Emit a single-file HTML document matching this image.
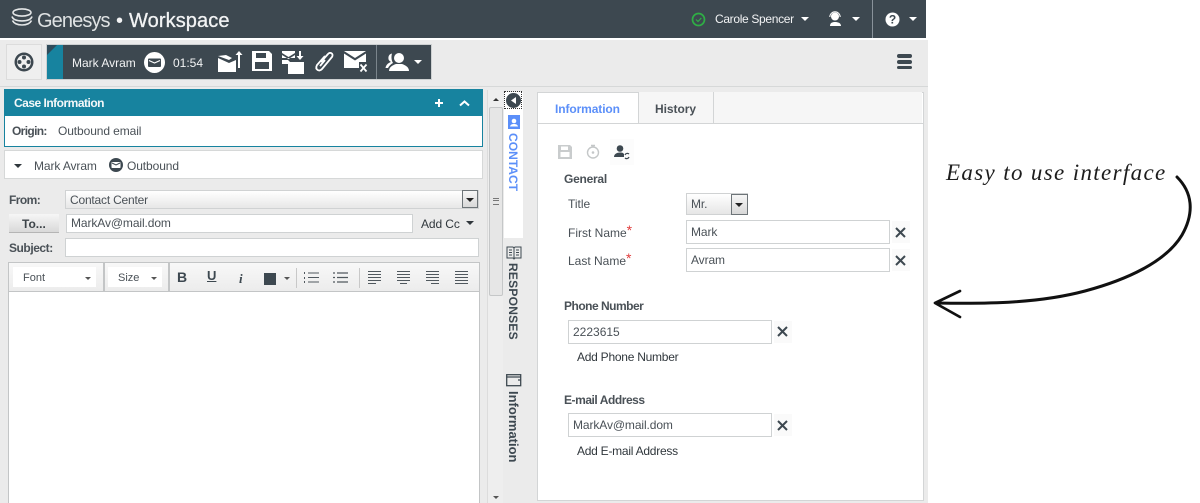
<!DOCTYPE html>
<html><head><meta charset="utf-8"><style>
html,body{margin:0;padding:0;background:#fff}
#p{position:relative;width:1200px;height:503px;overflow:hidden;background:#fff;font:12px "Liberation Sans",sans-serif;color:#4a5157}
#p div,#p span.a,#p svg{position:absolute}
.t{white-space:nowrap;line-height:14px}
.in{background:#fff;border:1px solid #cfd2d3;box-sizing:border-box;line-height:17px;padding-left:4px;white-space:nowrap}
.b{font-weight:bold}
.x{background:#fafafa;width:18px;height:22px}
.car{width:0;height:0;border-left:4px solid transparent;border-right:4px solid transparent;border-top:4px solid #fff}
.c2{width:0;height:0;border-left:3px solid transparent;border-right:3px solid transparent;border-top:3px solid #555}
.v{writing-mode:vertical-rl;white-space:nowrap;font-weight:bold;line-height:16px}
</style></head><body><div id="p">

<!-- top bar -->
<div style="left:0;top:0;width:926px;height:38px;background:#3d4850"></div>
<svg style="left:10px;top:7px" width="24" height="22" viewBox="0 0 24 22" fill="none" stroke="#e4e6e7" stroke-width="1.6"><ellipse cx="12" cy="5.5" rx="9" ry="3.6"/><path d="M2 9.5c1 3 5 4.4 10 4.400s9-1.400 10-4.400M2.500 13.500c1.500 3 5 4.500 9.500 4.500s8-1.500 9.500-4.500"/></svg>
<div class="t" style="left:37px;top:9px;font-size:20px;line-height:24px;color:#dfe2e3;letter-spacing:-.9px">Genesys</div>
<div class="t" style="left:116px;top:9px;font-size:20px;line-height:24px;color:#f2f3f4">&bull;</div>
<div class="t" style="left:129px;top:9px;font-size:20px;line-height:24px;color:#f2f3f4;letter-spacing:.1px;-webkit-text-stroke:.3px #f2f3f4">Workspace</div>
<svg style="left:691px;top:12px" width="15" height="15" viewBox="0 0 15 15" fill="none" stroke="#2fae45" stroke-width="1.700"><circle cx="7.500" cy="7.500" r="6"/><path d="M5 7.500l2 2 3.300-3.500" stroke-width="1.200"/></svg>
<div class="t" style="left:715px;top:12px;color:#f2f3f4;letter-spacing:-.33px">Carole Spencer</div>
<div class="car" style="left:801px;top:17px"></div>
<svg style="left:827px;top:11px" width="17" height="16" viewBox="0 0 17 16" fill="#fff"><circle cx="8" cy="5.500" r="4"/><path d="M3 15c0-3 2-4 5-4s6 1 6 4z"/><path d="M2.800 6a5.200 5.200 0 0 1 10.400 0" fill="none" stroke="#fff" stroke-width="1"/></svg>
<div class="car" style="left:852px;top:17px"></div>
<div style="left:872px;top:0;width:1px;height:38px;background:#89929a"></div>
<svg style="left:885px;top:12px" width="15" height="15" viewBox="0 0 15 15"><circle cx="7.500" cy="7.500" r="7" fill="#fff"/><text x="7.500" y="11.500" text-anchor="middle" font-family="Liberation Sans" font-weight="bold" font-size="12" fill="#3d4850">?</text></svg>
<div class="car" style="left:909px;top:17px"></div>

<!-- main bg -->
<div style="left:0;top:40px;width:928px;height:463px;background:#ebebeb"></div>
<div style="left:0;top:86px;width:928px;height:1px;background:#d6d8d8"></div>

<!-- toolbar -->
<div style="left:6px;top:44px;width:36px;height:36px;box-sizing:border-box;border:1px solid #dcdcdc;background:#efefef"></div>
<svg style="left:13px;top:51px" width="22" height="22" viewBox="0 0 22 22"><circle cx="11" cy="11" r="9.500" fill="#3d4850"/><circle cx="11" cy="11" r="7" fill="#efefef"/><g fill="#3d4850"><circle cx="11" cy="6.500" r="2"/><circle cx="11" cy="15.500" r="2"/><circle cx="6.500" cy="11" r="2"/><circle cx="15.500" cy="11" r="2"/></g></svg>
<div style="left:46px;top:44px;width:386px;height:36px;background:#3d4850;border:1px solid #cdd0d1;box-sizing:border-box"></div>
<div style="left:47px;top:45px;width:16px;height:34px;background:#17839f"></div>
<svg style="left:47px;top:45px" width="16" height="34"><path d="M0 0h10L0 10z" fill="#2f4b5a"/></svg>
<div class="t" style="left:72px;top:56px;color:#f2f3f4;letter-spacing:0">Mark Avram</div>
<svg style="left:144px;top:52px" width="22" height="22" viewBox="0 0 22 22"><circle cx="10.500" cy="10.500" r="10.500" fill="#fff"/><rect x="4" y="6.500" width="13" height="8.500" rx="1" fill="#3d4850"/><path d="M5 8.500l5.500 2.500 5.500-2.500" stroke="#fff" stroke-width="1.200" fill="none"/></svg>
<div class="t" style="left:173px;top:56px;color:#f2f3f4">01:54</div>
<svg style="left:217px;top:50px" width="27" height="24" viewBox="0 0 27 24" fill="#fff"><path d="M1 8l11 5 7-3v12H1z"/><path d="M1 6l8-1 6 3-3 2z"/><path d="M21 18V5h-2.500L22 1l3.500 4H23v13z"/></svg>
<svg style="left:251px;top:50px" width="22" height="22" viewBox="0 0 22 22"><path d="M1 1h17l3 3v17H1z" fill="#fff"/><rect x="5" y="3" width="10" height="5" fill="#3d4850"/><rect x="4" y="12" width="14" height="7" fill="#3d4850"/></svg>
<svg style="left:281px;top:50px" width="24" height="24" viewBox="0 0 24 24" fill="#fff"><path d="M1 1h13v2L7.500 7 1 3z"/><path d="M1 5l6.500 4L14 5v3H1z"/><path d="M18 1h2v5h2.500L19 10l-3.500-4H18z"/><path d="M1 10h6l2 2h14v12H7V14H1z"/></svg>
<svg style="left:313px;top:50px" width="23" height="24" viewBox="0 0 23 24" fill="none" stroke="#fff" stroke-width="1.800"><path d="M8 12l7-8c2-2.500 6-.5 4 3L9 19c-2.500 3-7.500 1-5-4l8-9"/><path d="M12 10l-5 6"/></svg>
<svg style="left:344px;top:51px" width="25" height="22" viewBox="0 0 25 22" fill="#fff"><path d="M0 0h22L11 7z"/><path d="M0 2.500l11 7 11-7V11h-7v6H0z"/><path d="M16.500 13.500l6 7m0-7l-6 7" stroke="#fff" stroke-width="1.800"/></svg>
<div style="left:376px;top:45px;width:1px;height:34px;background:#7b858c"></div>
<svg style="left:385px;top:52px" width="25" height="20" viewBox="0 0 25 20" fill="#fff"><circle cx="14" cy="6" r="5"/><path d="M4 19c0-4 4-6 7-7h6c3 1 7 3 7 7z"/><path d="M7 1.500a4.500 4.500 0 0 0-1 8.500C3 11 1 13 .5 16H3c1-2 3-4 5-5-1.500-2.500-2-6-1-9.500z"/></svg>
<div class="car" style="left:414px;top:60px"></div>
<div style="left:897px;top:54px;width:15px;height:3.500px;background:#3d4850;border-radius:2px"></div>
<div style="left:897px;top:60px;width:15px;height:3.500px;background:#3d4850;border-radius:2px"></div>
<div style="left:897px;top:65.500px;width:15px;height:3.500px;background:#3d4850;border-radius:2px"></div>

<!-- case info -->
<div style="left:4px;top:89px;width:479px;height:58px;box-sizing:border-box;border:1px solid #17839f;background:#fff"></div>
<div style="left:4px;top:89px;width:479px;height:27px;background:#17839f"></div>
<div class="t b" style="left:14px;top:96px;color:#f4f8f9;letter-spacing:-.5px">Case Information</div>
<svg style="left:434px;top:98px" width="36" height="11" viewBox="0 0 36 11" fill="none" stroke="#fff" stroke-width="2"><path d="M5 1v8M1 5h8M26 7.500l4.500-4 4.500 4"/></svg>
<div class="t b" style="left:12px;top:124px;color:#4a5157;letter-spacing:-.65px">Origin:</div>
<div class="t" style="left:58px;top:124px;letter-spacing:-.1px">Outbound email</div>

<!-- party -->
<div style="left:4px;top:150px;width:479px;height:29px;box-sizing:border-box;border:1px solid #d6d8d8;background:#fff"></div>
<div style="left:14px;top:164px;width:0;height:0;border-left:4px solid transparent;border-right:4px solid transparent;border-top:4px solid #30373c"></div>
<div class="t" style="left:34px;top:159px;letter-spacing:-.1px">Mark Avram</div>
<svg style="left:109px;top:158px" width="14" height="14" viewBox="0 0 14 14"><circle cx="7" cy="7" r="7" fill="#3d4850"/><rect x="2.500" y="4" width="9" height="6" rx=".8" fill="#fff"/><path d="M3 5l4 2 4-2" stroke="#3d4850" fill="none"/></svg>
<div class="t" style="left:127px;top:159px;letter-spacing:-.1px">Outbound</div>

<!-- form -->
<div class="t b" style="left:9px;top:193px;letter-spacing:-.55px">From:</div>
<div style="left:65px;top:190px;width:414px;height:19px;box-sizing:border-box;border:1px solid #d0d2d3;background:linear-gradient(#fff,#e7e7e7)"></div>
<div class="t" style="left:70px;top:193px;letter-spacing:-.2px">Contact Center</div>
<div style="left:462px;top:190px;width:16px;height:18px;box-sizing:border-box;border:1px solid #6d7478;background:linear-gradient(#f6f6f6,#d8d8d8)"></div>
<div style="left:466px;top:198px;width:0;height:0;border-left:4px solid transparent;border-right:4px solid transparent;border-top:4px solid #222"></div>
<div style="left:9px;top:214px;width:50px;height:19px;background:linear-gradient(#f6f6f6,#d9d9d9);border-bottom:1px solid #b5b5b5;box-sizing:border-box"></div>
<div class="t b" style="left:22px;top:217px;color:#3c4348">To...</div>
<div class="in" style="left:66px;top:214px;width:347px;height:19px;letter-spacing:-.1px">MarkAv@mail.dom</div>
<div class="t" style="left:421px;top:217px;color:#30373c;letter-spacing:-.1px">Add Cc</div>
<div style="left:466px;top:221px;width:0;height:0;border-left:4px solid transparent;border-right:4px solid transparent;border-top:4px solid #30373c"></div>
<div class="t b" style="left:9px;top:241px;letter-spacing:-.45px">Subject:</div>
<div class="in" style="left:65px;top:238px;width:414px;height:19px"></div>

<!-- editor -->
<div style="left:8px;top:262px;width:472px;height:242px;box-sizing:border-box;border:1px solid #c3c5c6;background:#fff"></div>
<div style="left:9px;top:263px;width:470px;height:29px;background:linear-gradient(#f8f8f8,#ececec);border-bottom:1px solid #c3c5c6;box-sizing:border-box"></div>
<div style="left:13px;top:267px;width:83px;height:20px;background:#fff"></div>
<div class="t" style="left:23px;top:271px;font-size:11px">Font</div><div class="c2" style="left:85px;top:277px"></div>
<div style="left:103px;top:263px;width:2px;height:28px;background:#c3c5c6"></div>
<div style="left:108px;top:267px;width:54px;height:20px;background:#fff"></div>
<div class="t" style="left:118px;top:271px;font-size:11px">Size</div><div class="c2" style="left:151px;top:277px"></div>
<div style="left:168px;top:263px;width:2px;height:28px;background:#c3c5c6"></div>
<div class="t b" style="left:177px;top:270px;font-size:14px;color:#3d4850">B</div>
<div class="t b" style="left:207px;top:269px;font-size:13px;color:#3d4850;text-decoration:underline">U</div>
<div class="t b" style="left:239px;top:271px;font:italic bold 13px 'Liberation Serif',serif;color:#3d4850">i</div>
<div style="left:264px;top:273px;width:12px;height:12px;background:#3d4850"></div>
<div class="c2" style="left:284px;top:277px"></div>
<div style="left:296px;top:268px;width:1px;height:20px;background:#c8c8c8"></div>
<svg style="left:304px;top:271px" width="15" height="13" fill="none" stroke="#50585e"><path d="M4 2h11M4 6.500h11M4 11h11M.5 1v2M.5 6v2M.5 10v2"/></svg>
<svg style="left:333px;top:271px" width="15" height="13" fill="none" stroke="#50585e"><path d="M4 2h11M4 6.500h11M4 11h11M0 2h2M0 6.500h2M0 11h2" stroke-width="1.200"/></svg>
<div style="left:359px;top:268px;width:1px;height:20px;background:#c8c8c8"></div>
<svg style="left:368px;top:270px" width="102" height="15" fill="none" stroke="#50585e"><path d="M0 1.500h13M0 4.500h13M0 7.500h13M0 10.500h13M0 13.500h8M29 1.500h13M29 4.500h13M29 7.500h13M29 10.500h13M32 13.500h7M58 1.500h13M58 4.500h13M58 7.500h13M58 10.500h13M63 13.500h8M87 1.500h13M87 4.500h13M87 7.500h13M87 10.500h13M87 13.500h13"/></svg>

<!-- scrollbar -->
<div style="left:487px;top:90px;width:16px;height:413px;background:#eeeeee;border-left:1px solid #dcdcdc;box-sizing:border-box"></div>
<div style="left:493px;top:98px;width:0;height:0;border-left:3px solid transparent;border-right:3px solid transparent;border-bottom:3px solid #333"></div>
<div style="left:489px;top:107px;width:14px;height:189px;box-sizing:border-box;border:1px solid #c5c7c8;border-radius:2px;background:#e6e6e6"></div>
<div style="left:493px;top:198px;width:6px;height:5px;border-top:1px solid #777;border-bottom:1px solid #777"></div>
<div style="left:493px;top:200px;width:6px;height:1px;background:#777"></div>
<div style="left:493px;top:496px;width:0;height:0;border-left:3px solid transparent;border-right:3px solid transparent;border-top:3px solid #555"></div>

<!-- side tabs -->
<div style="left:504px;top:92px;width:19px;height:146px;background:#fff"></div>
<div style="left:504px;top:91px;width:18px;height:18px;box-sizing:border-box;border:1px dotted #333"></div>
<svg style="left:506px;top:93px" width="15" height="15" viewBox="0 0 15 15"><circle cx="7.500" cy="7.500" r="7.500" fill="#3d4850"/><path d="M10 4v7L5 7.500z" fill="#fff"/></svg>
<svg style="left:508px;top:115px" width="12" height="14" viewBox="0 0 12 14"><rect width="12" height="14" fill="#5b8ff9"/><circle cx="6" cy="6" r="2.300" fill="#fff"/><path d="M2 11.500c.5-2 2-2.500 4-2.500s3.500.5 4 2.500z" fill="#fff"/></svg>
<div class="v" style="left:505px;top:133px;color:#5b8ff9;letter-spacing:.05px">CONTACT</div>
<svg style="left:506px;top:245px" width="16" height="15" viewBox="0 0 16 15" fill="none" stroke="#3d4850"><path d="M1 2h6l1 1 1-1h6v11H9l-1 1-1-1H1zM8 3v10"/><path d="M3 5h3M3 7.500h3M3 10h3M10 5h3M10 7.500h3M10 10h3"/></svg>
<div class="v" style="left:505px;top:263px;color:#3d4850;letter-spacing:.25px">RESPONSES</div>
<svg style="left:506px;top:374px" width="16" height="14" viewBox="0 0 16 14" fill="none" stroke="#3d4850" stroke-width="1.300"><rect x=".7" y=".7" width="14" height="11"/><path d="M1 3h14M12 6h3"/></svg>
<div class="v" style="left:505px;top:391px;color:#3d4850;font-size:13px">Information</div>

<!-- right panel -->
<div style="left:537px;top:92px;width:387px;height:409px;box-sizing:border-box;border:1px solid #d3d5d6;background:#fff"></div>
<div style="left:538px;top:123px;width:385px;height:1px;background:#d3d5d6"></div>
<div style="left:638px;top:92px;width:284px;height:32px;background:#f6f6f6;border-bottom:1px solid #d3d5d6;box-sizing:border-box"></div>
<div style="left:638px;top:92px;width:1px;height:32px;background:#d3d5d6"></div>
<div style="left:713px;top:92px;width:1px;height:32px;background:#d3d5d6"></div>
<div class="t b" style="left:555px;top:102px;color:#5b8ff9;letter-spacing:-.1px">Information</div>
<div class="t b" style="left:655px;top:102px;color:#4a5157;letter-spacing:-.05px">History</div>

<svg style="left:558px;top:145px" width="14" height="14" viewBox="0 0 14 14"><path d="M0 0h12l2 2v12H0z" fill="#c9cccd"/><rect x="3" y="1.500" width="7" height="3.500" fill="#fff"/><rect x="2.500" y="7" width="9" height="5" fill="#fff"/></svg>
<svg style="left:586px;top:144px" width="14" height="15" viewBox="0 0 14 15" fill="none" stroke="#c4c7c8" stroke-width="1.400"><circle cx="7" cy="8.500" r="5.500"/><path d="M5 1.500h4M7 1.500v2"/><circle cx="7" cy="8.500" r="1.300" fill="#c4c7c8" stroke="none"/></svg>
<div style="left:610px;top:139px;width:24px;height:26px;background:#fcfcfc"></div>
<svg style="left:613px;top:145px" width="18" height="15" viewBox="0 0 18 15"><circle cx="7" cy="3.500" r="3.300" fill="#3d4850"/><path d="M1 12c0-3 3-4.500 6-4.500S10 8 11 9v3z" fill="#3d4850"/><path d="M12 10a2.500 2.500 0 0 1 4-1M16 12a2.500 2.500 0 0 1-4 1" stroke="#3d4850" stroke-width="1.200" fill="none"/></svg>

<div class="t b" style="left:564px;top:172px;letter-spacing:-.25px">General</div>
<div class="t" style="left:568px;top:197px">Title</div>
<div class="t" style="left:568px;top:225px">First Name<span style="color:#e03a3a;font-size:14px;position:relative;top:-2px">*</span></div>
<div class="t" style="left:568px;top:253px">Last Name<span style="color:#e03a3a;font-size:14px;position:relative;top:-2px">*</span></div>

<div style="left:686px;top:193px;width:62px;height:22px;box-sizing:border-box;border:1px solid #d0d2d3;background:linear-gradient(#fff,#e6e6e6)"></div>
<div class="t" style="left:691px;top:197px;letter-spacing:-.1px">Mr.</div>
<div style="left:731px;top:194px;width:17px;height:21px;box-sizing:border-box;border:1px solid #6d7478;background:linear-gradient(#f6f6f6,#d8d8d8)"></div>
<div style="left:735px;top:203px;width:0;height:0;border-left:4px solid transparent;border-right:4px solid transparent;border-top:4px solid #222"></div>

<div class="in" style="left:686px;top:220px;width:204px;height:24px;line-height:23px;letter-spacing:-.1px">Mark</div>
<div class="x" style="left:892px;top:221px"></div>
<svg style="left:895px;top:227px" width="11" height="11" fill="none" stroke="#3d4850" stroke-width="2"><path d="M1 1l9 9M10 1l-9 9"/></svg>
<div class="in" style="left:686px;top:248px;width:204px;height:24px;line-height:23px;letter-spacing:-.1px">Avram</div>
<div class="x" style="left:892px;top:249px"></div>
<svg style="left:895px;top:255px" width="11" height="11" fill="none" stroke="#3d4850" stroke-width="2"><path d="M1 1l9 9M10 1l-9 9"/></svg>

<div class="t b" style="left:564px;top:299px;letter-spacing:-.5px">Phone Number</div>
<div class="in" style="left:568px;top:320px;width:204px;height:24px;line-height:23px">2223615</div>
<div class="x" style="left:774px;top:321px"></div>
<svg style="left:777px;top:326px" width="11" height="11" fill="none" stroke="#3d4850" stroke-width="2"><path d="M1 1l9 9M10 1l-9 9"/></svg>
<div class="t" style="left:577px;top:350px;color:#30373c;letter-spacing:-.25px">Add Phone Number</div>

<div class="t b" style="left:564px;top:393px;letter-spacing:-.45px">E-mail Address</div>
<div class="in" style="left:568px;top:413px;width:204px;height:24px;line-height:23px;letter-spacing:-.1px">MarkAv@mail.dom</div>
<div class="x" style="left:774px;top:414px"></div>
<svg style="left:777px;top:420px" width="11" height="11" fill="none" stroke="#3d4850" stroke-width="2"><path d="M1 1l9 9M10 1l-9 9"/></svg>
<div class="t" style="left:577px;top:444px;color:#30373c;letter-spacing:-.25px">Add E-mail Address</div>

<!-- annotation -->
<div class="t" style="left:946px;top:160px;font:italic 23px/26px 'Liberation Serif',serif;color:#1d1d1d;letter-spacing:1.35px">Easy to use interface</div>
<svg style="left:925px;top:170px" width="275" height="160" viewBox="925 170 275 160" fill="none" stroke="#111" stroke-linecap="round" stroke-linejoin="round"><path d="M1177 177C1192 192 1195 212 1182 235C1166 262 1126 280 1085 291C1040 303 990 304 937 303" stroke-width="3"/><path d="M960 291L935 303L960 317" stroke-width="2.700"/></svg>
</div></body></html>
